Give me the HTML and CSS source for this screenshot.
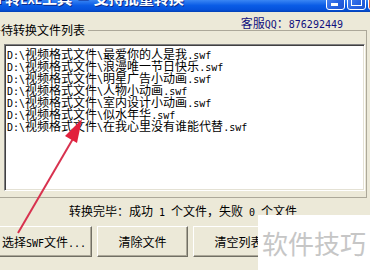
FILE: index.html
```html
<!DOCTYPE html>
<html lang="zh-CN">

<head>
    <meta charset="UTF-8">
    <title>SWF转EXE工具</title>
    <link rel="stylesheet" href="styles.css">
</head>

<body>
    <div class="window">
        <div class="titlebar">
            <span class="title"><span class="tl">F</span>转<span class="tl">EXE</span>工具 － 支持批量转换</span>
            <div class="ctrls">
                <span class="cbtn min"></span>
                <span class="cbtn max"></span>
                <span class="cbtn close"></span>
            </div>
        </div>
        <div class="service">客服<span class="en">QQ</span>：<span class="en">876292449</span></div>
        <fieldset class="group">
            <legend>待转换文件列表</legend>
            <div class="listbox">
                <div class="item"><span class="en">D:\</span>视频格式文件<span class="en">\</span>最爱你的人是我<span class="en">.swf</span></div>
                <div class="item"><span class="en">D:\</span>视频格式文件<span class="en">\</span>浪漫唯一节日快乐<span class="en">.swf</span></div>
                <div class="item"><span class="en">D:\</span>视频格式文件<span class="en">\</span>明星广告小动画<span class="en">.swf</span></div>
                <div class="item"><span class="en">D:\</span>视频格式文件<span class="en">\</span>人物小动画<span class="en">.swf</span></div>
                <div class="item"><span class="en">D:\</span>视频格式文件<span class="en">\</span>室内设计小动画<span class="en">.swf</span></div>
                <div class="item"><span class="en">D:\</span>视频格式文件<span class="en">\</span>似水年华<span class="en">.swf</span></div>
                <div class="item"><span class="en">D:\</span>视频格式文件<span class="en">\</span>在我心里没有谁能代替<span class="en">.swf</span></div>
            </div>
        </fieldset>
        <div class="status">转换完毕：成功<span class="en"> 1 </span>个文件，失败<span class="en"> 0 </span>个文件</div>
        <div class="buttons">
            <button class="btn btn-first">选择<span class="en">SWF</span>文件<span class="en">...</span></button>
            <button class="btn">清除文件</button>
            <button class="btn">清空列表</button>
        </div>
        <div class="tip">开始转换保存目录</div>
    </div>

    <!-- 红色箭头标注 -->
    <svg class="arrow" width="370" height="270" viewBox="0 0 370 270">
        <line x1="18" y1="233" x2="74" y2="137" stroke="#d8324f" stroke-width="2"/>
        <polygon points="82,119 77,143 65,136" fill="#e2203c"/>
    </svg>

    <div class="watermark">软件技巧</div>
</body>

</html>
```

FILE: styles.css
```css
html,
body,
div,
fieldset,
legend {
    margin: 0;
    padding: 0;
}

body {
    width: 370px;
    height: 270px;
    overflow: hidden;
    position: relative;
    background: #ece9d8;
    font-family: "Noto Sans CJK SC", sans-serif;
    font-size: 12px;
    color: #000;
}

.en {
    font-family: "DejaVu Sans Mono", monospace;
    font-size: 10px;
}

.window {
    width: 374px;
    margin-left: -4px;
}

/* 标题栏 */
.titlebar {
    height: 12px;
    overflow: hidden;
    display: flex;
    align-items: flex-end;
    justify-content: space-between;
    background: linear-gradient(#3a86f4, #0a5ce6 45%, #0552dc 80%, #0340b4);
}
.title {
    color: #fff;
    font-weight: bold;
    font-size: 15px;
    line-height: 15px;
    margin-bottom: 4px;
    padding-left: 2px;
    white-space: nowrap;
    text-shadow: 1px 1px 0 #0c2a8a;
}
.title .tl {
    font-family: "DejaVu Sans Mono", monospace;
    font-size: 12px;
}
.ctrls {
    display: flex;
    gap: 2px;
    margin-right: -17px;
    margin-bottom: 2px;
}
.cbtn {
    width: 19px;
    height: 21px;
    border: 1px solid #fff;
    border-radius: 3px;
    box-sizing: border-box;
    background: linear-gradient(135deg, #5f97f6, #2a66e4 60%, #1d52cf);
    position: relative;
}
.cbtn.min::after {
    content: "";
    position: absolute;
    left: 4px;
    bottom: 3px;
    width: 7px;
    height: 3px;
    background: #fff;
}
.cbtn.max::after {
    content: "";
    position: absolute;
    left: 3px;
    top: 3px;
    right: 3px;
    bottom: 3px;
    border: 1px solid #fff;
    border-top-width: 3px;
}
.cbtn.close {
    background: linear-gradient(135deg, #f08a60, #d9522c 60%, #c23a18);
}

/* 客服 */
.service {
    height: 12px;
    line-height: 21px;
    text-align: right;
    padding-right: 27px;
    color: #10107e;
    white-space: nowrap;
}

/* 分组框 */
.group {
    margin: 0 3px 0 3px;
    padding: 8px 1px 6px 4px;
    border: 1px solid #aca899;
    min-width: 0;
}
.group legend {
    line-height: 12px;
    padding: 0 3px 0 0;
    margin-left: -3px;
}
.listbox {
    height: 142px;
    background: #fff;
    border-top: 1px solid #808080;
    border-left: 1px solid #808080;
    border-right: 1px solid #fff;
    border-bottom: 1px solid #fff;
    box-shadow: inset 1px 1px 0 #404040, inset -1px -1px 0 #e4e1d4;
    padding: 3px 0 0 2px;
    white-space: nowrap;
    overflow: hidden;
}
.item {
    line-height: 12px;
    height: 12px;
}

/* 状态 */
.status {
    height: 26px;
    line-height: 26px;
    text-align: center;
    white-space: nowrap;
}

/* 按钮 */
.buttons {
    display: flex;
    gap: 5px;
    margin-top: 2px;
}
.btn {
    width: 91px;
    height: 31px;
    padding: 0;
    font-family: "Noto Sans CJK SC", sans-serif;
    font-size: 12px;
    color: #000;
    background: #ece9d8;
    border: 1px solid;
    border-color: #fff #716f64 #716f64 #fff;
    box-shadow: inset -1px -1px 0 #aca899;
    white-space: nowrap;
}
.btn-first {
    width: 96px;
}

.tip {
    margin-top: 14px;
    padding-left: 104px;
    line-height: 12px;
    white-space: nowrap;
}

/* 标注层 */
.arrow {
    position: absolute;
    left: 0;
    top: 0;
}
.watermark {
    position: absolute;
    left: 258px;
    top: 215px;
    width: 112px;
    height: 55px;
    background: #fff;
    color: #c6c6c6;
    font-size: 26px;
    line-height: 55px;
    padding-left: 4px;
    box-sizing: border-box;
    white-space: nowrap;
}
```
